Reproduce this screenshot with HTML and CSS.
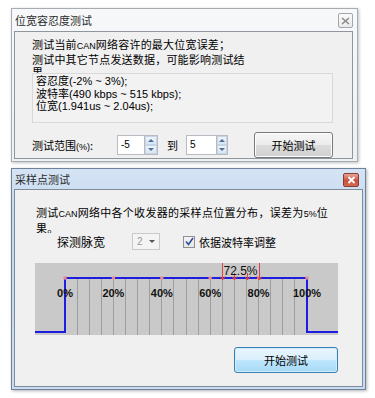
FILE: index.html
```html
<!DOCTYPE html>
<html lang="zh-CN">
<head>
<meta charset="utf-8">
<link rel="stylesheet" href="styles.css">
</head>
<body>
<div class="desk">
  <section class="win win1">
    <header class="titlebar">
      <span class="title">位宽容忍度测试</span>
      <span class="close close-off">
        <svg width="9" height="8" viewBox="0 0 9 8"><path d="M1 1 L8 7 M8 1 L1 7" stroke="#8a8a8a" stroke-width="1.6" fill="none"/></svg>
      </span>
    </header>
    <div class="client client1">
      <p class="desc">测试当前<span class="lat">CAN</span>网络容许的最大位宽误差；<br>测试中其它节点发送数据，可能影响测试结<br>果。</p>
      <div class="info">容忍度(-2% ~ 3%);<br>波特率(490 kbps ~ 515 kbps);<br>位宽(1.941us ~ 2.04us);</div>
      <div class="range-row">
        <span class="range-label">测试范围<span class="lat">(%)</span>:</span>
        <span class="spin spin1"><span class="spin-box">-5</span><span class="spin-btns"><span class="up"></span><span class="down"></span></span></span>
        <span class="to">到</span>
        <span class="spin spin2"><span class="spin-box">5</span><span class="spin-btns"><span class="up"></span><span class="down"></span></span></span>
        <button class="btn btn1">开始测试</button>
      </div>
    </div>
  </section>

  <section class="win win2">
    <header class="titlebar">
      <span class="title">采样点测试</span>
      <span class="close close-red">
        <svg width="9" height="8" viewBox="0 0 9 8"><path d="M1.5 1 L7.5 7 M7.5 1 L1.5 7" stroke="#fff" stroke-width="2" fill="none"/></svg>
      </span>
    </header>
    <div class="client client2">
      <p class="desc2">测试<span class="lat">CAN</span>网络中各个收发器的采样点位置分布，误差为<span class="lat">5%</span>位<br>果。</p>
      <div class="probe-row">
        <span class="probe-label">探测脉宽</span>
        <span class="combo"><span class="combo-val">2</span><span class="combo-arrow"></span></span>
        <span class="check">
          <svg width="9" height="9" viewBox="0 0 9 9"><path d="M1 4.5 L3.5 7.5 L8 1" stroke="#2b4ea0" stroke-width="1.6" fill="none"/></svg>
        </span>
        <span class="check-label">依据波特率调整</span>
      </div>
      <svg class="chart" width="303" height="72" viewBox="0 0 303 72">
        <rect width="303" height="72" fill="#c9c9c9"/>
        <g stroke="#9e9e9e" stroke-width="1">
          <path d="M42.5 15V72M54.5 15V72M66.5 15V72M78.5 15V72M90.5 15V72M102.5 15V72M114.5 15V72M126.5 15V72M138.5 15V72M151.5 15V72M163.5 15V72M175.5 15V72M187.5 15V72M199.5 15V72M211.5 15V72M223.5 15V72M235.5 15V72M247.5 15V72M259.5 15V72"/>
        </g>
        <path d="M0 69 H30 V15 H272 V69 H303" stroke="#1d1de0" stroke-width="2" fill="none"/>
        <g fill="#ec8a8a">
          <circle cx="30" cy="15" r="1.8"/>
          <circle cx="78.4" cy="15" r="1.8"/>
          <circle cx="126.8" cy="15" r="1.8"/>
          <circle cx="175.2" cy="15" r="1.8"/>
          <circle cx="223.6" cy="15" r="1.8"/>
          <circle cx="272" cy="15" r="1.8"/>
        </g>
        <g stroke="#e04040" stroke-width="1" fill="none">
          <path d="M187.5 0V17M224.5 0V17M199.5 10V17M212.5 10V17"/>
          <path d="M185 13.5L187.5 17L190 13.5M197 13.5L199.5 17L202 13.5M210 13.5L212.5 17L215 13.5M222 13.5L224.5 17L227 13.5"/>
        </g>
        <text class="mark" x="205.5" y="12" text-anchor="middle">72.5%</text>
        <g class="pct" text-anchor="middle">
          <text x="30" y="34">0%</text>
          <text x="78.4" y="34">20%</text>
          <text x="126.8" y="34">40%</text>
          <text x="175.2" y="34">60%</text>
          <text x="223.6" y="34">80%</text>
          <text x="272" y="34">100%</text>
        </g>
      </svg>
      <div class="foot">
        <button class="btn btn2">开始测试</button>
      </div>
    </div>
  </section>
</div>
</body>
</html>
```

FILE: styles.css
```css
html, body {
  margin: 0;
  padding: 0;
  background: #ffffff;
}

body {
  font-family: "Noto Sans CJK SC", "Liberation Sans", sans-serif;
  font-size: 11px;
  color: #000;
}

.desk {
  position: relative;
  width: 375px;
  height: 398px;
  overflow: hidden;
}

.lat {
  font-family: "Liberation Sans", sans-serif;
  font-size: 9px;
}

/* windows placed on a desktop */
.win {
  position: absolute;
  box-sizing: border-box;
  display: flex;
  flex-direction: column;
}

.win1 {
  left: 11px;
  top: 8px;
  width: 347px;
  height: 154px;
  border: 1px solid #a7acb2;
  background: linear-gradient(#f7f8f9, #eef0f2);
  padding: 0 4px 3px 2px;
  box-shadow: 1px 1px 3px rgba(0,0,0,0.25);
}

.win2 {
  left: 11px;
  top: 168px;
  width: 355px;
  height: 222px;
  border: 1px solid #6e839b;
  background: linear-gradient(#d5e4f4, #c6daf0 40px, #c9dcf1);
  padding: 0 2px 2px 2px;
  box-shadow: 1px 1px 3px rgba(0,0,0,0.3);
}

.titlebar {
  flex: none;
  display: flex;
  align-items: center;
  justify-content: space-between;
}

.win1 .titlebar {
  height: 22px;
}

.win2 .titlebar {
  height: 20px;
}

.title {
  font-size: 11px;
  color: #2b2b2b;
  padding-left: 1px;
}

.close {
  display: flex;
  align-items: center;
  justify-content: center;
  box-sizing: border-box;
}

.close-off {
  width: 15px;
  height: 15px;
  border: 1px solid #a3a7ab;
  border-radius: 2px;
  background: linear-gradient(#fbfbfb, #e9eaeb);
  margin-top: 1px;
}

.close-red {
  width: 16px;
  height: 14px;
  margin-right: 4px;
  margin-top: 1px;
  border: 1px solid #8a3b32;
  border-radius: 2px;
  background: linear-gradient(#e9a597, #c9503d 55%, #d56a55);
}

.client {
  flex: 1;
  box-sizing: border-box;
  background: #f0f0f0;
  border: 1px solid #8f969e;
  display: flex;
  flex-direction: column;
}

/* window 1 */
.client1 {
  padding: 6px 0 0 17px;
}

.desc {
  margin: 0;
  height: 35px;
  overflow: hidden;
  line-height: 13px;
  letter-spacing: 0.2px;
}

.desc .lat {
  letter-spacing: 0;
}

.info {
  box-sizing: border-box;
  width: 301px;
  height: 50px;
  border: 1px solid #d9d9d9;
  background: #f2f2f2;
  padding: 1px 0 0 3px;
  font-family: "Liberation Sans", "Noto Sans CJK SC", sans-serif;
  font-size: 11px;
  line-height: 12.5px;
}

.range-row {
  display: flex;
  align-items: center;
  margin-top: 9px;
  height: 26px;
}

.range-label {
  width: 85px;
}

.spin {
  display: flex;
  height: 20px;
  box-sizing: border-box;
}

.spin-box {
  box-sizing: border-box;
  height: 20px;
  background: #fff;
  border: 1px solid #b8bcc2;
  border-right: none;
  font-family: "Liberation Sans", sans-serif;
  font-size: 10px;
  line-height: 18px;
  padding-left: 3px;
}

.spin1 .spin-box { width: 27px; }
.spin2 .spin-box { width: 30px; }

.spin-btns {
  display: flex;
  flex-direction: column;
  width: 14px;
  height: 20px;
  box-sizing: border-box;
  border: 1px solid #b8bcc2;
  background: #fff;
}

.spin2 .spin-btns { width: 12px; }

.spin-btns span {
  flex: 1;
  display: flex;
  align-items: center;
  justify-content: center;
  background: linear-gradient(#eef4fb, #d8e5f3);
  border: 1px solid #c6d4e4;
  box-sizing: border-box;
}

.spin-btns .up::after {
  content: "";
  border-left: 3px solid transparent;
  border-right: 3px solid transparent;
  border-bottom: 3px solid #4e6f95;
}

.spin-btns .down::after {
  content: "";
  border-left: 3px solid transparent;
  border-right: 3px solid transparent;
  border-top: 3px solid #4e6f95;
}

.to {
  width: 19px;
  margin-left: 9px;
}

.btn {
  font-family: "Noto Sans CJK SC", sans-serif;
  font-size: 11px;
  color: #000;
  box-sizing: border-box;
  border-radius: 3px;
  padding: 0;
  cursor: default;
}

.btn1 {
  width: 79px;
  height: 26px;
  margin-left: 26px;
  border: 1px solid #7a7a7a;
  background: linear-gradient(#f6f6f6, #ebebeb 50%, #dcdcdc 51%, #d1d1d1);
  box-shadow: inset 0 0 0 1px #fcfcfc;
}

/* window 2 */
.client2 {
  padding: 15px 0 0 21px;
  border-color: #7f8b98;
}

.desc2 {
  margin: 0;
  height: 28px;
  overflow: hidden;
  line-height: 14px;
  letter-spacing: 0.3px;
}

.desc2 .lat {
  letter-spacing: 0;
}

.probe-row {
  display: flex;
  align-items: center;
  height: 17px;
}

.probe-label {
  width: 75px;
  margin-left: 21px;
  font-size: 12px;
}

.combo {
  display: flex;
  align-items: center;
  justify-content: space-between;
  box-sizing: border-box;
  width: 28px;
  height: 17px;
  border: 1px solid #c9c9c9;
  background: #f4f4f4;
  padding: 0 4px 0 4px;
}

.combo-val {
  font-family: "Liberation Sans", sans-serif;
  font-size: 10px;
  color: #9a9a9a;
}

.combo-arrow {
  border-left: 3px solid transparent;
  border-right: 3px solid transparent;
  border-top: 3px solid #555;
}

.check {
  display: flex;
  align-items: center;
  justify-content: center;
  box-sizing: border-box;
  width: 12px;
  height: 12px;
  margin-left: 23px;
  border: 1px solid #8e8f8f;
  background: linear-gradient(#f3f3f3, #e6e6e6);
}

.check-label {
  margin-left: 4px;
}

.chart {
  display: block;
  margin-top: 13px;
  margin-left: -1px;
}

.chart .pct {
  font-family: "Liberation Sans", sans-serif;
  font-size: 11px;
  font-weight: bold;
  fill: #111;
}

.chart .mark {
  font-family: "Liberation Sans", sans-serif;
  font-size: 12px;
  fill: #111;
}

.foot {
  display: flex;
  justify-content: flex-end;
  width: 303px;
  margin-left: -1px;
  margin-top: 12px;
}

.btn2 {
  width: 104px;
  height: 26px;
  border: 1px solid #3c7fb1;
  background: linear-gradient(#eaf6fd, #d9f0fc 50%, #bee6fd 51%, #a7d9f5);
  box-shadow: inset 0 0 0 1px #cdeefd;
}
```
